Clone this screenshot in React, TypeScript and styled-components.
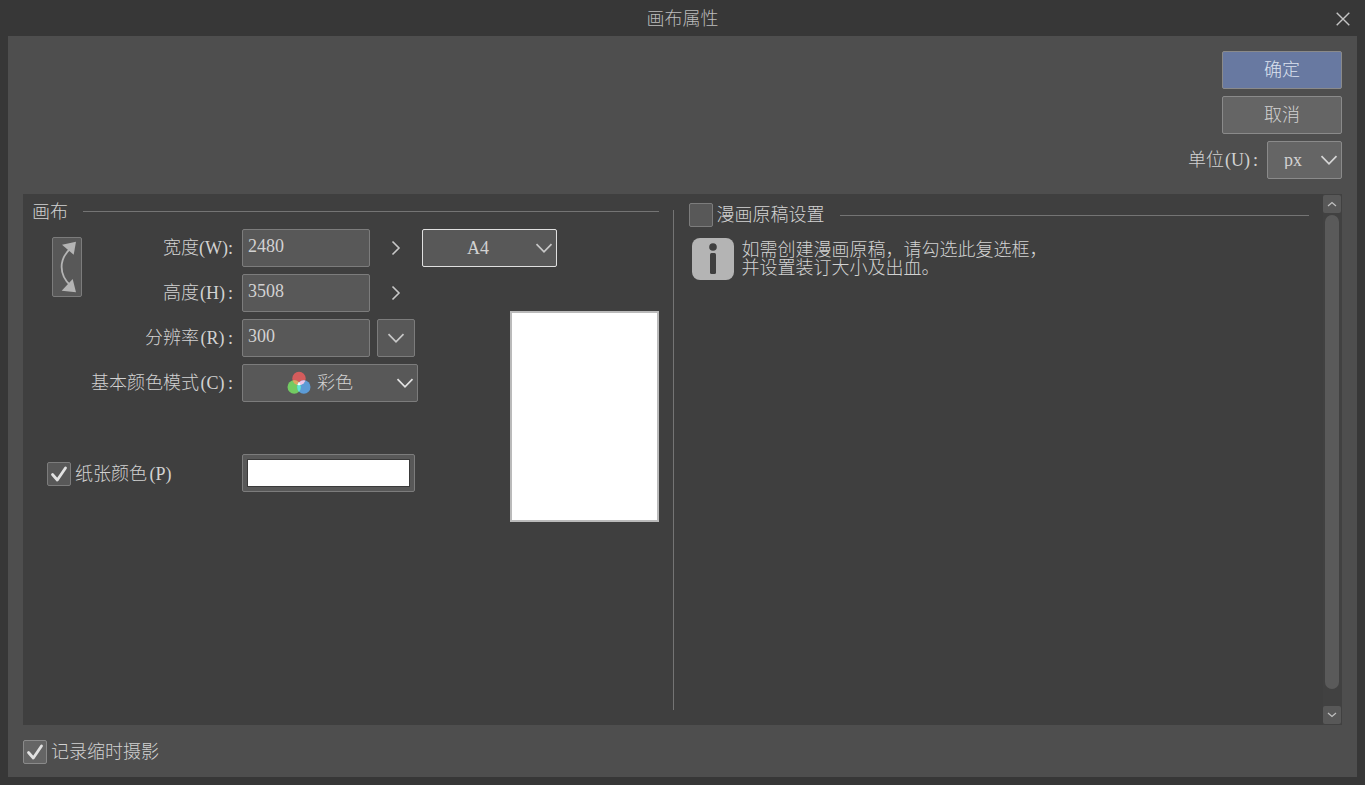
import React, { useState } from "react";
import styled, { createGlobalStyle, css } from "styled-components";

const GlobalStyle = createGlobalStyle`
  *, *::before, *::after { box-sizing: border-box; }
  body {
    margin: 0;
    background: #373737;
    color: #d2d2d2;
    font-family: "Liberation Serif", "Noto Sans CJK SC", serif;
    font-size: 18px;
    font-weight: 300;
    line-height: 18px;
  }
  button, input, select {
    margin: 0;
    padding: 0;
    font: inherit;
    color: inherit;
  }
`;

const Dialog = styled.main`
  display: flex;
  flex-direction: column;
  min-height: 100vh;
  padding: 0 8px 8px;
`;

const TitleBar = styled.header`
  display: grid;
  grid-template-columns: 28px 1fr 28px;
  align-items: center;
  height: 36px;
  padding-top: 1px;
`;

const Title = styled.h1`
  grid-column: 2;
  margin: 0;
  font-size: 18px;
  font-weight: 300;
  text-align: center;
  color: #bcbcbc;
`;

const CloseButton = styled.button`
  display: grid;
  place-items: center;
  height: 28px;
  border: 0;
  background: none;
  color: #c4c4c4;
`;

const Body = styled.div`
  flex: 1;
  display: flex;
  flex-direction: column;
  padding: 15px 15px 0;
  background: #4e4e4e;
`;

const Actions = styled.div`
  display: flex;
  flex-direction: column;
  align-items: flex-end;
  gap: 7px;
  padding-bottom: 15px;
`;

const ActionButton = styled.button<{ $primary?: boolean }>`
  width: 120px;
  height: 38px;
  border: 1px solid #8a8a8a;
  border-radius: 2px;
  background: ${(p) => (p.$primary ? "#6879a1" : "#656565")};
  color: ${(p) => (p.$primary ? "#dbe2ef" : "#d2d2d2")};
`;

const UnitRow = styled.div`
  display: flex;
  align-items: center;
  gap: 7px;
`;

const Label = styled.label`
  display: flex;
  align-items: center;
  justify-content: flex-end;
  white-space: nowrap;
`;

const KeyHint = styled.span`
  display: inline-block;
  width: 27px;
  text-align: center;
`;

const Colon = styled.span`
  width: 9px;
  text-align: center;
`;

const Panel = styled.section`
  flex: 1;
  display: flex;
  background: #3f3f3f;
`;

const Columns = styled.div`
  flex: 1;
  display: grid;
  grid-template-columns: 1fr 1px 1fr;
`;

const Divider = styled.div`
  margin: 16px 0 15px;
  background: #747474;
`;

const CanvasGroup = styled.div`
  padding: 0 14px 0 9px;
`;

const ComicGroup = styled.div`
  padding: 0 14px 0 15px;
`;

const GroupHeader = styled.div<{ $height: number }>`
  display: flex;
  align-items: center;
  gap: 15px;
  height: ${(p) => p.$height}px;
`;

const GroupTitle = styled.h2`
  margin: 0;
  font-size: 18px;
  font-weight: 300;
`;

const Rule = styled.div`
  flex: 1;
  height: 1px;
  background: #747474;
`;

const FormGrid = styled.div`
  display: grid;
  grid-template-columns: 30px 153px 1fr 149px;
  grid-auto-rows: 38px;
  row-gap: 7px;
  padding-left: 20px;
`;

const LabelCell = styled.div<{ $row: number }>`
  grid-column: 1 / 3;
  grid-row: ${(p) => p.$row};
  display: flex;
  align-items: center;
  justify-content: flex-end;
`;

const FieldCell = styled.div<{ $row: number; $wide?: boolean }>`
  grid-column: 3 / ${(p) => (p.$wide ? 5 : 4)};
  grid-row: ${(p) => p.$row};
  display: flex;
  align-items: center;
  gap: 7px;
  padding-left: 7px;
`;

const control = css`
  height: 38px;
  border: 1px solid #7c7c7c;
  border-radius: 2px;
  background: #585858;
`;

const SwapButton = styled.button`
  ${control}
  grid-column: 1;
  grid-row: 1 / 3;
  z-index: 1;
  height: 60px;
  margin-top: 8px;
`;

const NumberField = styled.input`
  ${control}
  width: 128px;
  padding: 0 5px 3px;
`;

const IconButton = styled.button<{ $plain?: boolean }>`
  ${control}
  display: grid;
  place-items: center;
  width: 38px;
  color: #c8c8c8;
  ${(p) => p.$plain && "border-color: transparent; background: none;"}
`;

const SelectBox = styled.div<{ $width: number }>`
  position: relative;
  width: ${(p) => p.$width}px;
`;

const Select = styled.select<{ $tone?: "light" | "focus"; $icon?: boolean }>`
  ${control}
  appearance: none;
  width: 100%;
  padding: 0 23px 0 0;
  text-align-last: center;
  outline: 0;
  ${(p) => p.$tone === "light" && "border-color: #8a8a8a; background: #656565;"}
  ${(p) => p.$tone === "focus" && "border-color: #e0e0e0;"}
  ${(p) => p.$icon && "padding-left: 74px; text-align-last: left;"}
`;

const SelectArrow = styled.span`
  position: absolute;
  top: 0;
  right: 4px;
  display: flex;
  align-items: center;
  height: 38px;
  pointer-events: none;
`;

const SelectIcon = styled.span`
  position: absolute;
  top: 0;
  left: 45px;
  display: flex;
  align-items: center;
  height: 38px;
  pointer-events: none;
`;

const SwatchButton = styled.button`
  ${control}
  display: flex;
  width: 173px;
  padding: 4px;
`;

const Swatch = styled.span`
  flex: 1;
  border: 1px solid #3a3a3a;
  background: #fff;
`;

const PaperOption = styled.div`
  grid-column: 1 / 3;
  grid-row: 6;
  display: flex;
  align-items: center;
  margin-left: -5px;
  padding-top: 2px;
`;

const PaperPreview = styled.div`
  grid-column: 4;
  grid-row: 2 / 8;
  height: 211px;
  margin-top: 37px;
  border: 2px solid #bababa;
  background: #fff;
`;

const CheckLabel = styled.label`
  display: flex;
  align-items: center;
  gap: 4px;
  white-space: nowrap;
`;

const CheckStack = styled.span`
  display: grid;
  width: 24px;
  height: 24px;

  > * {
    grid-area: 1 / 1;
  }
  > svg {
    pointer-events: none;
    visibility: hidden;
  }
  > input:checked + svg {
    visibility: visible;
  }
`;

const CheckInput = styled.input<{ $light?: boolean }>`
  appearance: none;
  width: 24px;
  height: 24px;
  border: 1px solid ${(p) => (p.$light ? "#8a8a8a" : "#7c7c7c")};
  border-radius: 2px;
  background: ${(p) => (p.$light ? "#656565" : "#585858")};
`;

const Info = styled.div`
  display: flex;
  align-items: flex-start;
  gap: 8px;
  padding: 2px 0 0 3px;
`;

const InfoText = styled.p`
  margin: 3px 0 0;
`;

const ScrollBar = styled.div`
  display: flex;
  flex-direction: column;
  align-items: center;
  gap: 2px;
  width: 19px;
  padding: 1px 1px 1px 0;
  background: #414141;
`;

const ScrollButton = styled.button`
  display: grid;
  place-items: center;
  width: 18px;
  height: 18px;
  border: 0;
  border-radius: 2px;
  background: #585858;
  color: #c0c0c0;
`;

const ScrollThumb = styled.div`
  flex: 1;
  width: 14px;
  margin-bottom: 15px;
  border-radius: 7px;
  background: #5a5a5a;
`;

const Footer = styled.footer`
  display: flex;
  align-items: center;
  height: 52px;
  padding-top: 2px;
`;

function ChevronDown({ color = "#c8c8c8" }: { color?: string }) {
  return (
    <svg width="18" height="12" viewBox="0 0 18 12" fill="none" aria-hidden="true">
      <path d="M1.5 2.2 9 9.8l7.5-7.6" stroke={color} strokeWidth="1.7" />
    </svg>
  );
}

function ChevronRight() {
  return (
    <svg width="10" height="16" viewBox="0 0 10 16" fill="none" aria-hidden="true">
      <path d="M1.5 1.5 8 8l-6.5 6.5" stroke="#c8c8c8" strokeWidth="1.6" />
    </svg>
  );
}

function SmallChevron({ up }: { up?: boolean }) {
  return (
    <svg width="10" height="6" viewBox="0 0 10 6" fill="none" aria-hidden="true">
      <path d={up ? "M1 5l4-3.5L9 5" : "M1 1l4 3.5L9 1"} stroke="currentColor" strokeWidth="1.2" />
    </svg>
  );
}

function SwapIcon() {
  return (
    <svg width="28" height="58" viewBox="0 0 28 58" fill="none" aria-hidden="true">
      <path d="M18 10C5.5 21 5.5 37 18 48" stroke="#b4b4b4" strokeWidth="1.8" />
      <path d="M23 3.7 9 6.7l11.700 10z" fill="#b4b4b4" />
      <path d="M23 54.2 8.700 52.700 19.700 41z" fill="#b4b4b4" />
    </svg>
  );
}

function ColorCircles() {
  return (
    <svg width="24" height="24" viewBox="0 0 24 24" aria-hidden="true">
      <defs>
        <clipPath id="circle-red"><circle cx="12" cy="7.5" r="6.7" /></clipPath>
        <clipPath id="circle-green"><circle cx="7.2" cy="16" r="6.7" /></clipPath>
      </defs>
      <circle cx="12" cy="7.5" r="6.7" fill="#d45c5c" />
      <circle cx="7.2" cy="16" r="6.7" fill="#73cb62" />
      <circle cx="16.8" cy="16" r="6.7" fill="#5c9bd6" />
      <circle cx="7.2" cy="16" r="6.7" fill="#e0a463" clipPath="url(#circle-red)" />
      <circle cx="16.8" cy="16" r="6.7" fill="#efc6e6" clipPath="url(#circle-red)" />
      <circle cx="16.8" cy="16" r="6.7" fill="#62ead0" clipPath="url(#circle-green)" />
      <g clipPath="url(#circle-red)">
        <circle cx="16.8" cy="16" r="6.7" fill="#fff" clipPath="url(#circle-green)" />
      </g>
    </svg>
  );
}

function InfoIcon() {
  return (
    <svg width="42" height="42" viewBox="0 0 42 42" aria-hidden="true">
      <rect width="42" height="42" rx="8" fill="#b4b4b4" />
      <circle cx="21" cy="9" r="3.8" fill="#3f3f3f" />
      <rect x="18" y="15" width="6" height="21" rx="1.5" fill="#3f3f3f" />
    </svg>
  );
}

function CheckBox({ id, light, initial }: { id: string; light?: boolean; initial?: boolean }) {
  const [on, setOn] = useState(!!initial);
  return (
    <CheckStack>
      <CheckInput id={id} type="checkbox" $light={light} checked={on} onChange={() => setOn(!on)} />
      <svg width="24" height="24" viewBox="0 0 24 24" fill="none" aria-hidden="true">
        <path d="M5.5 12.5 10.3 18 18.5 6" stroke="#e2e2e2" strokeWidth="2.8" strokeLinecap="round" strokeLinejoin="round" />
      </svg>
    </CheckStack>
  );
}

function FieldLabel({ htmlFor, text, hint }: { htmlFor: string; text: string; hint: string }) {
  return (
    <Label htmlFor={htmlFor}>
      {text}
      <KeyHint>({hint})</KeyHint>
      <Colon>:</Colon>
    </Label>
  );
}

export default function App() {
  return (
    <>
      <GlobalStyle />
      <Dialog>
        <TitleBar>
          <Title>画布属性</Title>
          <CloseButton type="button" aria-label="关闭">
            <svg width="14" height="14" viewBox="0 0 14 14" fill="none" aria-hidden="true">
              <path d="M.7.7l12.6 12.6M13.3.7.7 13.3" stroke="currentColor" strokeWidth="1.4" />
            </svg>
          </CloseButton>
        </TitleBar>
        <Body>
          <Actions>
            <ActionButton type="button" $primary>确定</ActionButton>
            <ActionButton type="button">取消</ActionButton>
            <UnitRow>
              <FieldLabel htmlFor="unit" text="单位" hint="U" />
              <SelectBox $width={75}>
                <Select id="unit" $tone="light">
                  <option>px</option>
                </Select>
                <SelectArrow><ChevronDown color="#d6d6d6" /></SelectArrow>
              </SelectBox>
            </UnitRow>
          </Actions>
          <Panel>
            <Columns>
              <CanvasGroup>
                <GroupHeader $height={35}>
                  <GroupTitle>画布</GroupTitle>
                  <Rule />
                </GroupHeader>
                <FormGrid>
                  <SwapButton type="button" aria-label="交换宽度和高度"><SwapIcon /></SwapButton>
                  <LabelCell $row={1}><FieldLabel htmlFor="width" text="宽度" hint="W" /></LabelCell>
                  <FieldCell $row={1} $wide>
                    <NumberField id="width" defaultValue="2480" />
                    <IconButton type="button" $plain aria-label="宽度预设"><ChevronRight /></IconButton>
                    <SelectBox $width={135}>
                      <Select $tone="focus" aria-label="纸张尺寸">
                        <option>A4</option>
                      </Select>
                      <SelectArrow><ChevronDown /></SelectArrow>
                    </SelectBox>
                  </FieldCell>
                  <LabelCell $row={2}><FieldLabel htmlFor="height" text="高度" hint="H" /></LabelCell>
                  <FieldCell $row={2}>
                    <NumberField id="height" defaultValue="3508" />
                    <IconButton type="button" $plain aria-label="高度预设"><ChevronRight /></IconButton>
                  </FieldCell>
                  <LabelCell $row={3}><FieldLabel htmlFor="resolution" text="分辨率" hint="R" /></LabelCell>
                  <FieldCell $row={3}>
                    <NumberField id="resolution" defaultValue="300" />
                    <IconButton type="button" aria-label="分辨率预设"><ChevronDown /></IconButton>
                  </FieldCell>
                  <LabelCell $row={4}><FieldLabel htmlFor="mode" text="基本颜色模式" hint="C" /></LabelCell>
                  <FieldCell $row={4}>
                    <SelectBox $width={176}>
                      <Select id="mode" $icon>
                        <option>彩色</option>
                      </Select>
                      <SelectIcon><ColorCircles /></SelectIcon>
                      <SelectArrow><ChevronDown color="#e2e2e2" /></SelectArrow>
                    </SelectBox>
                  </FieldCell>
                  <PaperOption>
                    <CheckLabel htmlFor="paper">
                      <CheckBox id="paper" initial />
                      <span>纸张颜色<KeyHint>(P)</KeyHint></span>
                    </CheckLabel>
                  </PaperOption>
                  <FieldCell $row={6}>
                    <SwatchButton type="button" aria-label="选择纸张颜色"><Swatch /></SwatchButton>
                  </FieldCell>
                  <PaperPreview />
                </FormGrid>
              </CanvasGroup>
              <Divider />
              <ComicGroup>
                <GroupHeader $height={42}>
                  <CheckLabel htmlFor="comic">
                    <CheckBox id="comic" />
                    <span>漫画原稿设置</span>
                  </CheckLabel>
                  <Rule />
                </GroupHeader>
                <Info>
                  <InfoIcon />
                  <InfoText>
                    如需创建漫画原稿，请勾选此复选框，
                    <br />
                    并设置装订大小及出血。
                  </InfoText>
                </Info>
              </ComicGroup>
            </Columns>
            <ScrollBar>
              <ScrollButton type="button" aria-label="向上滚动"><SmallChevron up /></ScrollButton>
              <ScrollThumb />
              <ScrollButton type="button" aria-label="向下滚动"><SmallChevron /></ScrollButton>
            </ScrollBar>
          </Panel>
          <Footer>
            <CheckLabel htmlFor="timelapse">
              <CheckBox id="timelapse" light initial />
              <span>记录缩时摄影</span>
            </CheckLabel>
          </Footer>
        </Body>
      </Dialog>
    </>
  );
}
